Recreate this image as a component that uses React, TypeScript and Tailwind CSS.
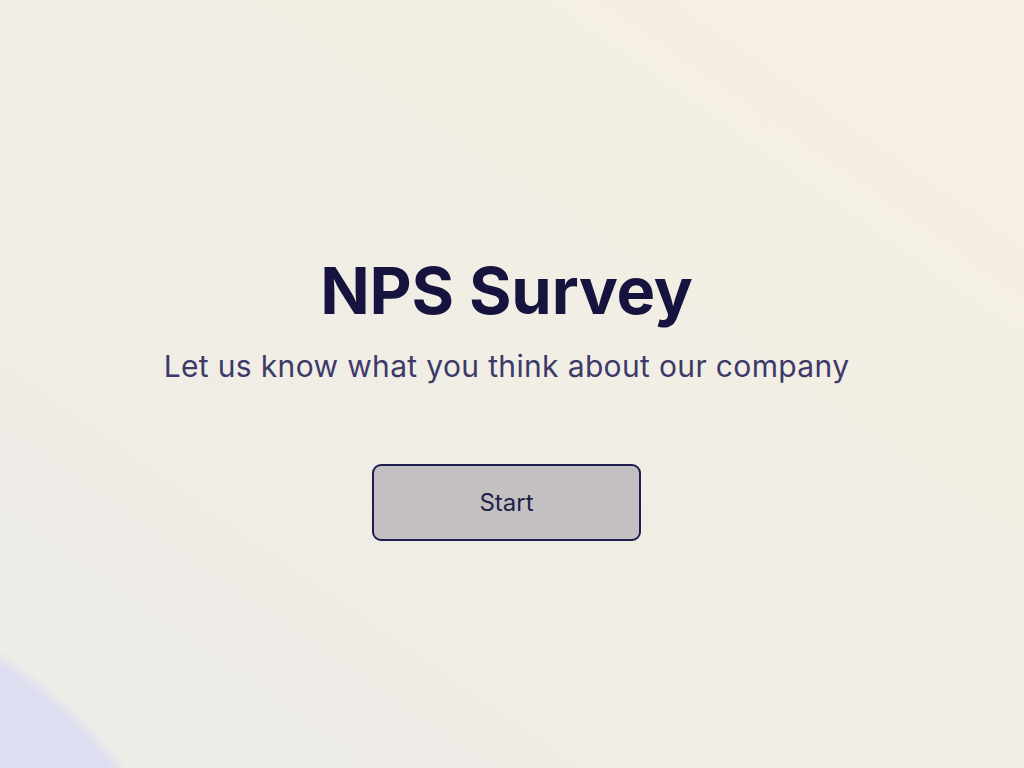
export default function App() {
  return (
    <main
      className="relative flex h-[768px] w-full flex-col items-center overflow-hidden bg-[#f0ede5] bg-[radial-gradient(circle_at_-260px_1060px,#dbdbf3_0px,#dedef1_472px,rgba(240,237,229,0)_486px),linear-gradient(215deg,#f8f0e2_0%,#f2eee4_35%,#efede6_70%,#eeece7_100%)] pr-[11px] pt-[253px]"
      style={{ fontFamily: "Inter, 'Noto Sans', sans-serif" }}
    >
      <h1 className="text-[65px] font-bold leading-[76px] tracking-[-0.2px] text-[#16143f]">
        NPS Survey
      </h1>
      <p className="mt-[19px] text-[30px] leading-[36px] tracking-[0.35px] text-[#3d3a69]">
        Let us know what you think about our company
      </p>
      <button className="mt-[80px] h-[77px] w-[269px] rounded-[9px] border-2 border-[#1f1d4e] bg-[#c4c0c2] text-[24px] text-[#211f4b]">
        Start
      </button>
    </main>
  );
}
